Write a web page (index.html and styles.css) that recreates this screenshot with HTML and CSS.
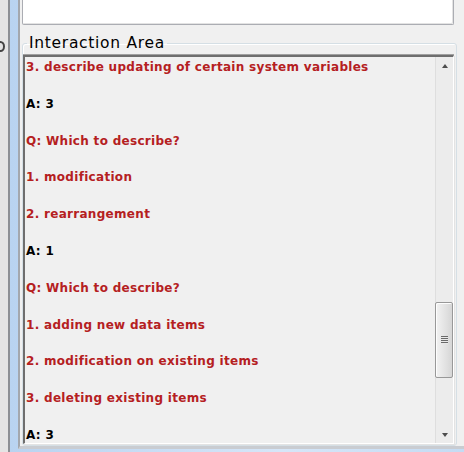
FILE: index.html
```html
<!DOCTYPE html>
<html>
<head>
<meta charset="utf-8">
<link rel="stylesheet" href="styles.css">
</head>
<body>
<div class="desk">
  <div class="backdrop"><span class="peek"></span></div>
  <div class="frame">
    <div class="client">
      <div class="input-box"></div>
      <fieldset class="group">
        <legend class="group-title">Interaction Area</legend>
        <div class="log">
          <div class="log-lines">
            <p class="line q">3. describe updating of certain system variables</p>
            <p class="line a">A: 3</p>
            <p class="line q">Q: Which to describe?</p>
            <p class="line q">1. modification</p>
            <p class="line q">2. rearrangement</p>
            <p class="line a">A: 1</p>
            <p class="line q">Q: Which to describe?</p>
            <p class="line q">1. adding new data items</p>
            <p class="line q">2. modification on existing items</p>
            <p class="line q">3. deleting existing items</p>
            <p class="line a">A: 3</p>
          </div>
          <div class="vscroll">
            <div class="arrow up"></div>
            <div class="track">
              <div class="thumb"><span class="grip"></span></div>
            </div>
            <div class="arrow down"></div>
          </div>
        </div>
      </fieldset>
    </div>
  </div>
</div>
</body>
</html>
```
FILE: styles.css
```css
html, body {
  margin: 0;
  padding: 0;
}

body {
  width: 464px;
  height: 452px;
  overflow: hidden;
  background: #f0f0f0;
  font-family: "DejaVu Sans", sans-serif;
}

.desk {
  display: flex;
  height: 452px;
}

/* sliver of the window behind */
.backdrop {
  width: 8px;
  background: #e4e4e4;
  position: relative;
  overflow: hidden;
}

.peek {
  position: absolute;
  left: -4px;
  top: 41px;
  width: 5px;
  height: 7px;
  border: 2px solid #444;
  border-radius: 50%;
}

/* window frame: dark outline, blue glass, inner edge */
.frame {
  flex: 1;
  display: flex;
  border-left: 2px solid #8c8f94;
  background: linear-gradient(to right, #b9d3f0, #d6e6f8 60%, #c4dbf3);
  padding: 0 0 3px 8px;
}

.client {
  flex: 1;
  display: flex;
  flex-direction: column;
  background: #f0f0f0;
  border-left: 2px solid #a3a7ad;
  border-bottom: 3px solid #c9ccd1;
  padding: 0 7px 0 2px;
}

.input-box {
  height: 24px;
  margin-right: 3px;
  background: #fff;
  border: 1px solid #abadb3;
  border-top: none;
  box-shadow: inset -1px -1px 0 #e3e3e3;
  border-radius: 0 0 2px 2px;
}

.group {
  flex: 1;
  margin: 10px 0 0 0;
  padding: 0 2px 1px 0;
  border: 1px solid #d5dfe5;
  border-radius: 3px;
  box-shadow: inset 1px 1px 0 #fff;
  display: flex;
  flex-direction: column;
  min-height: 0;
}

.group-title {
  padding: 0 2px;
  margin-left: 4px;
  font-size: 15.5px;
  letter-spacing: 0.7px;
  color: #000;
  line-height: 17px;
}

.log {
  flex: 1;
  display: flex;
  min-height: 0;
  margin-top: 3px;
  background: #f0f0f0;
  border-top: 2px solid #6e6e6e;
  border-left: 2px solid #6e6e6e;
  border-right: 1px solid #fff;
  border-bottom: 1px solid #fff;
  box-shadow: 0 -1px 0 #a0a0a0, 1px 1px 0 #e3e3e3;
}

.log-lines {
  flex: 1;
  padding: 1px 0 0 1px;
  overflow: hidden;
}

.line {
  margin: 0;
  height: 36.8px;
  line-height: 18.4px;
  font-size: 12px;
  font-weight: bold;
  letter-spacing: 0.3px;
  white-space: nowrap;
}

.q { color: #b5201f; }
.a { color: #000; }

.vscroll {
  width: 17px;
  display: flex;
  flex-direction: column;
  background: #ececec;
  border-left: 1px solid #dedede;
}

.arrow {
  height: 17px;
  display: flex;
  align-items: center;
  justify-content: center;
}

.arrow::before {
  content: "";
  width: 0;
  height: 0;
  border-left: 3.5px solid transparent;
  border-right: 3.5px solid transparent;
}

.arrow.up::before { border-bottom: 4px solid #4d4d4d; }
.arrow.down::before { border-top: 4px solid #4d4d4d; }

.track {
  flex: 1;
  display: flex;
  flex-direction: column;
  justify-content: flex-end;
  padding-bottom: 48px;
}

.thumb {
  height: 74px;
  margin: 0 0 0 -1px;
  border: 1px solid #989898;
  border-radius: 2px;
  background: linear-gradient(to right, #f2f2f2, #e6e6e6 45%, #d6d6d6);
  box-shadow: inset 1px 1px 0 #fdfdfd;
  display: flex;
  align-items: center;
  justify-content: center;
}

.grip {
  width: 7px;
  height: 8px;
  background: repeating-linear-gradient(to bottom, #6a6a6a 0 1px, #e9e9e9 1px 2px);
}
```
